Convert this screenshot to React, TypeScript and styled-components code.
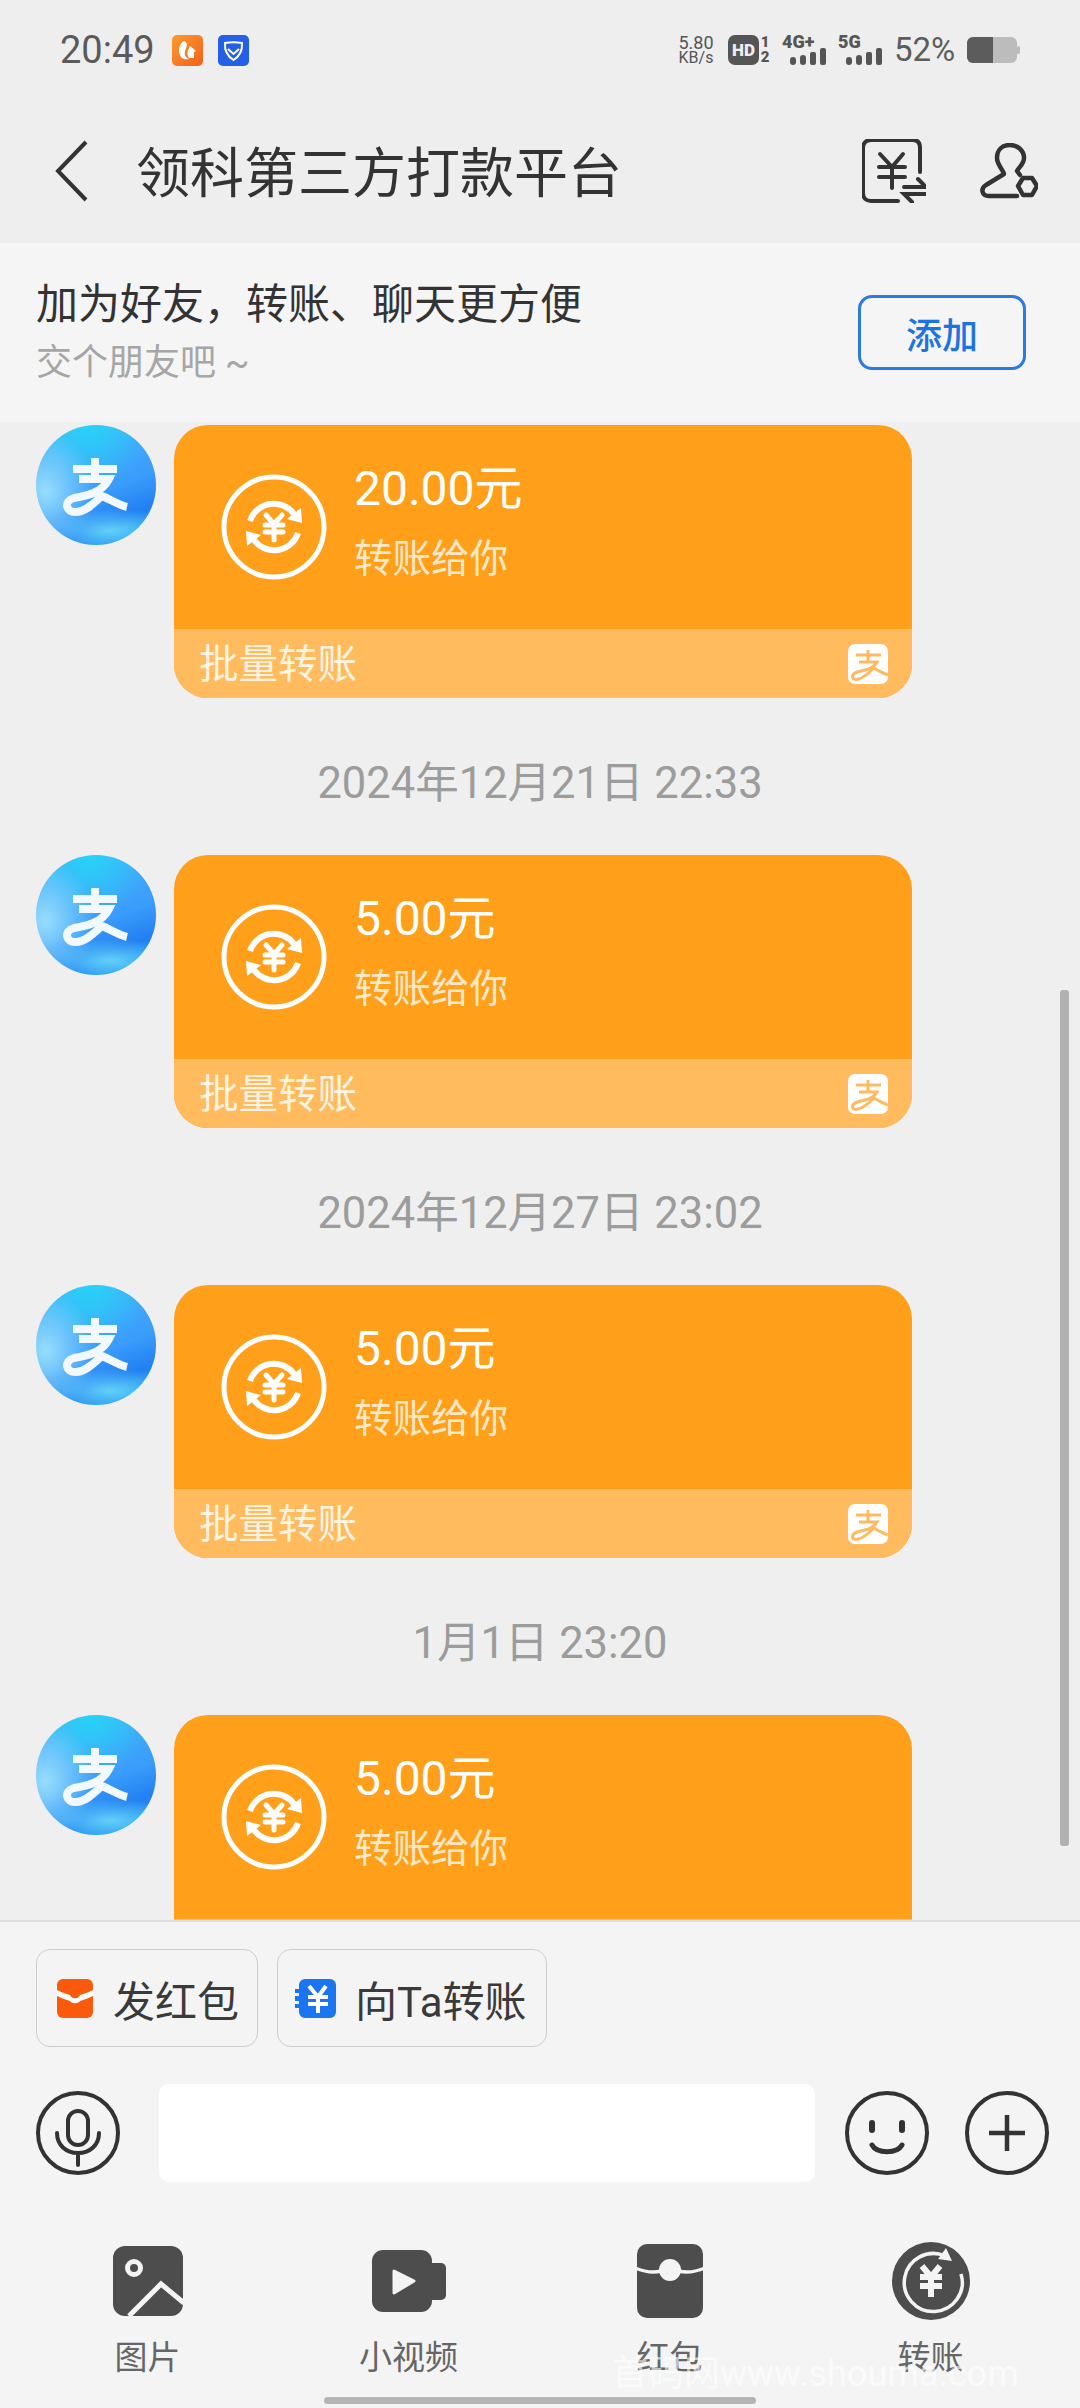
import React from "react";
import styled, { createGlobalStyle } from "styled-components";

const GlobalStyle = createGlobalStyle`
  html, body { margin: 0; padding: 0; background: #efefef; }
  * { box-sizing: border-box; }
`;

const FONT = `Roboto, "Noto Sans CJK SC", sans-serif`;

const Page = styled.div`
  position: relative;
  width: 1080px;
  height: 2408px;
  overflow: hidden;
  display: flex;
  flex-direction: column;
  background: #efefef;
  font-family: ${FONT};
`;

const TopArea = styled.header`
  height: 243px;
  flex: none;
  background: #eeeeee;
  display: flex;
  flex-direction: column;
`;

const StatusBar = styled.div`
  height: 100px;
  padding: 0 60px 0 60px;
  display: flex;
  align-items: center;
  justify-content: space-between;
`;

const StatusLeft = styled.div`
  display: flex;
  align-items: center;
`;

const Clock = styled.span`
  font-size: 38px;
  line-height: 40px;
  color: #5a5a5a;
  width: 112px;
`;

const AppBadge = styled.span`
  width: 31px;
  height: 31px;
  border-radius: 5px;
  margin-right: 15px;
  display: flex;
  align-items: center;
  justify-content: center;
  background: ${(p: { $kind: "uc" | "shield" }) =>
    p.$kind === "uc" ? "linear-gradient(135deg,#ff9a2e,#f2601c)" : "#2460e6"};
`;

const StatusRight = styled.div`
  display: flex;
  align-items: center;
  color: #555;
`;

const Speed = styled.span`
  display: flex;
  flex-direction: column;
  align-items: center;
  width: 38px;
  margin-right: 13px;
  font-size: 18px;
  line-height: 15px;
  color: #555;
  & > small { font-size: 16px; }
`;

const HdBox = styled.span`
  width: 31px;
  height: 30px;
  border-radius: 7px;
  background: #555;
  color: #eee;
  font-size: 17px;
  font-weight: 900;
  display: flex;
  align-items: center;
  justify-content: center;
`;

const SimDigits = styled.span`
  display: flex;
  flex-direction: column;
  align-items: center;
  width: 12px;
  margin-right: 11px;
  font-size: 15px;
  line-height: 15px;
  font-weight: 900;
`;

const Signal = styled.span`
  position: relative;
  width: ${(p: { $w: number }) => p.$w}px;
  height: 30px;
  margin-right: 12px;
`;

const SignalLabel = styled.span`
  position: absolute;
  left: 0;
  top: -3px;
  font-size: 18px;
  line-height: 20px;
  font-weight: 900;
  color: #555;
`;

const SignalBars = styled.svg`
  position: absolute;
  right: 0;
  bottom: 0;
`;

const Percent = styled.span`
  font-size: 33px;
  line-height: 36px;
  color: #5c5c5c;
  width: 73px;
`;

const NavBar = styled.nav`
  height: 143px;
  padding: 0 42px 2px 55px;
  display: flex;
  align-items: center;
`;

const Title = styled.h1`
  margin: 8px 0 0 48px;
  flex: 1;
  font-size: 54px;
  line-height: 70px;
  font-weight: 400;
  color: #333;
`;

const NavIcons = styled.div`
  display: flex;
  align-items: center;
  gap: 54px;
`;

const Banner = styled.section`
  height: 179px;
  flex: none;
  background: #f5f5f5;
  padding: 0 54px 0 36px;
  display: flex;
  align-items: center;
  justify-content: space-between;
`;

const BannerText = styled.div`
  display: flex;
  flex-direction: column;
  gap: 5px;
`;

const BannerTitle = styled.div`
  font-size: 42px;
  line-height: 56px;
  color: #333;
`;

const BannerSub = styled.div`
  font-size: 36px;
  line-height: 50px;
  color: #a6a6a6;
`;

const AddButton = styled.button`
  width: 168px;
  height: 75px;
  border: 3px solid #2a7ae2;
  border-radius: 14px;
  background: transparent;
  color: #1c74e4;
  font-family: ${FONT};
  font-size: 36px;
  font-weight: 500;
  padding: 0;
`;

const Chat = styled.main`
  flex: 1;
  min-height: 0;
  overflow: hidden;
  padding: 3px 0 0 36px;
  display: flex;
  flex-direction: column;
  background: #efefef;
`;

const Row = styled.div`
  flex: none;
  display: flex;
  gap: 18px;
`;

const Avatar = styled.div`
  flex: none;
  width: 120px;
  height: 120px;
  border-radius: 50%;
  overflow: hidden;
  background:
    radial-gradient(ellipse 70px 22px at 62% 88%, rgba(110, 220, 250, 0.85), transparent 100%),
    radial-gradient(ellipse 50px 60px at 8% 55%, rgba(160, 228, 252, 0.9), transparent 100%),
    radial-gradient(circle 60px at 45% 0%, #25d3f7, transparent 100%),
    linear-gradient(160deg, #4bb8fb 0%, #3a9cfb 55%, #2280f2 75%, #1ca2ee 100%);
`;

const Bubble = styled.article`
  flex: none;
  width: 738px;
  height: 273px;
  border-radius: 34px;
  overflow: hidden;
  background: #ff9f1a;
  display: flex;
  flex-direction: column;
`;

const BubbleBody = styled.div`
  flex: 1;
  display: flex;
  align-items: center;
  padding: 0 0 0 47px;
  gap: 27px;
`;

const Amounts = styled.div`
  display: flex;
  flex-direction: column;
  gap: 13px;
  margin-top: -11px;
`;

const Amount = styled.div`
  font-size: 48px;
  line-height: 62px;
  color: #fff;
`;

const Caption = styled.div`
  font-size: 38.5px;
  line-height: 52px;
  color: #ffe8c8;
`;

const BubbleFooter = styled.div`
  height: 69px;
  flex: none;
  background: #ffbb5e;
  padding: 0 24px 0 25px;
  display: flex;
  align-items: center;
  justify-content: space-between;
  color: #fff4e2;
  font-size: 39.5px;
  & > span { margin-top: -6px; }
`;

const MiniLogo = styled.div`
  width: 40px;
  height: 40px;
  border-radius: 7px;
  background: #fff;
  overflow: hidden;
`;

const Stamp = styled.div`
  flex: none;
  height: 157px;
  padding: 5px 36px 0 0;
  display: flex;
  align-items: center;
  justify-content: center;
  font-size: 43.5px;
  color: #9c9c9c;
`;

const ScrollThumb = styled.div`
  position: absolute;
  left: 1060px;
  top: 990px;
  width: 9px;
  height: 856px;
  border-radius: 3px;
  background: #b2b2b2;
`;

const Composer = styled.footer`
  flex: none;
  height: 488px;
  background: #f4f4f4;
  border-top: 2px solid #dedede;
  padding-top: 27px;
  display: flex;
  flex-direction: column;
`;

const Chips = styled.div`
  display: flex;
  gap: 19px;
  padding: 0 36px;
`;

const Chip = styled.div`
  height: 98px;
  width: ${(p: { $w: number }) => p.$w}px;
  border: 1.5px solid #cdcdcd;
  border-radius: 14px;
  padding-left: ${(p: { $w: number }) => (p.$w > 240 ? 15 : 20)}px;
  display: flex;
  align-items: center;
  gap: ${(p: { $w: number }) => (p.$w > 240 ? 19 : 20)}px;
  font-size: 42px;
  color: #3a3a3a;
`;

const InputRow = styled.div`
  margin-top: 37px;
  padding: 0 31px 0 36px;
  display: flex;
  align-items: center;
`;

const TextField = styled.div`
  width: 657px;
  height: 98px;
  margin: 0 30px 0 39px;
  border-radius: 10px;
  background: #fff;
`;

const RoundButton = styled.svg`
  flex: none;
  margin-right: ${(p: { $gap?: number }) => p.$gap ?? 0}px;
`;

const Tools = styled.div`
  margin-top: 59px;
  padding-left: 17px;
  display: grid;
  grid-template-columns: repeat(4, 261px);
`;

const Tool = styled.div`
  display: flex;
  flex-direction: column;
  align-items: center;
  gap: 15px;
`;

const ToolLabel = styled.span`
  font-size: 33px;
  line-height: 44px;
  color: #666;
`;

const HomeBar = styled.div`
  align-self: center;
  width: 432px;
  height: 7px;
  margin-top: 17px;
  border-radius: 4px;
  background: #b5b5b5;
`;

const Watermark = styled.div`
  position: absolute;
  left: 612px;
  bottom: 12px;
  font-size: 36px;
  line-height: 44px;
  color: rgba(255, 255, 255, 0.6);
  white-space: nowrap;
`;

const ZHI_STROKE = "M37 44H81M59 33V54M43 54H73C66 68 50 71 38 73C27 76 30 88 40 87C50 87 60 76 66 71C74 74 82 80 91 82";

const TransferRing = () => (
  <svg width="106" height="106" viewBox="0 0 106 106" fill="none" stroke="#fff">
    <circle cx="53" cy="53" r="50" strokeWidth="5" />
    <path d="M29 47A25 25 0 0 1 73 40" strokeWidth="6" />
    <path d="M66 45L81 49L80 34Z" fill="#fff" stroke="none" />
    <path d="M77 59A25 25 0 0 1 33 66" strokeWidth="6" />
    <path d="M40 61L25 57L26 72Z" fill="#fff" stroke="none" />
    <path d="M45 41L53 50L61 41M44 51H62M44 58H62M53 50V66" strokeWidth="5" strokeLinecap="round" />
  </svg>
);

const MESSAGES = [
  { amount: "20.00元", stamp: "2024年12月21日 22:33" },
  { amount: "5.00元", stamp: "2024年12月27日 23:02" },
  { amount: "5.00元", stamp: "1月1日 23:20" },
  { amount: "5.00元", stamp: "" },
];

const Bars = ({ w }: { w: number }) => (
  <SignalBars width={w} height="17" viewBox={`0 0 ${w} 17`} fill="#555">
    <rect x={w - 36} y="9" width="6" height="8" rx="3" />
    <rect x={w - 26} y="7" width="6" height="10" rx="3" />
    <rect x={w - 16} y="4" width="6" height="13" rx="2" />
    <rect x={w - 6} y="0" width="6" height="17" rx="2" />
  </SignalBars>
);

export default function App() {
  return (
    <Page>
      <GlobalStyle />
      <TopArea>
        <StatusBar>
          <StatusLeft>
            <Clock>20:49</Clock>
            <AppBadge $kind="uc">
              <svg width="25" height="25" viewBox="0 0 25 25" fill="#fff">
                <path d="M9 3C4 6 3 12 5 17C6 21 10 22 14 21C11 20 9 17 10 13C11 10 12 8 12 6C11 4 10 3 9 3Z" />
                <path d="M15 8L21 13L19 14V20H14C12 18 12 14 13 12Z" />
              </svg>
            </AppBadge>
            <AppBadge $kind="shield">
              <svg width="25" height="25" viewBox="0 0 25 25" fill="none" stroke="#fff" strokeWidth="2">
                <path d="M4 5C9 4 16 4 21 5C21.500 12 19 18 12.500 22C6 18 3.500 12 4 5Z" />
                <path d="M7 11L12.500 16L18 11" />
              </svg>
            </AppBadge>
          </StatusLeft>
          <StatusRight>
            <Speed>
              5.80
              <small>KB/s</small>
            </Speed>
            <HdBox>HD</HdBox>
            <SimDigits>
              <span>1</span>
              <span>2</span>
            </SimDigits>
            <Signal $w={44}>
              <SignalLabel>4G+</SignalLabel>
              <Bars w={44} />
            </Signal>
            <Signal $w={44}>
              <SignalLabel>5G</SignalLabel>
              <Bars w={44} />
            </Signal>
            <Percent>52%</Percent>
            <svg width="53" height="26" viewBox="0 0 53 26">
              <rect x="0" y="0" width="50" height="26" rx="6" fill="#bcbcbc" />
              <path d="M6 0H26V26H6A6 6 0 0 1 0 20V6A6 6 0 0 1 6 0Z" fill="#5c5c5c" />
              <rect x="50" y="9" width="3" height="8" rx="1.500" fill="#bcbcbc" />
            </svg>
          </StatusRight>
        </StatusBar>
        <NavBar>
          <svg width="33" height="62" viewBox="0 0 33 62" fill="none" stroke="#333" strokeWidth="4">
            <path d="M31 2L3 31L31 60" />
          </svg>
          <Title>领科第三方打款平台</Title>
          <NavIcons>
            <svg width="64" height="64" viewBox="0 0 64 64" fill="none" stroke="#333" strokeWidth="4" strokeLinecap="round">
              <path d="M36 62H9C4 62 1 59 1 54V9C1 4 4 1 9 1H51C56 1 58 4 58 9V33" />
              <path d="M18 15L30 28L41 15M17 28H43M17 38H43M30 28V49" />
              <path d="M42 48H64L56 40M64 55H42L50 63" />
            </svg>
            <svg width="58" height="56" viewBox="0 0 58 56" fill="none" stroke="#333" strokeWidth="4.500" strokeLinecap="round" strokeLinejoin="round">
              <path d="M37 53H9C2 53 0 46 6 42L24 31C24 28 17 22 17 15C17 7 22 2 30 2C37 2 44 7 44 15C44 21 39 24 37 28L40 32" />
              <path d="M43 35H52L57 43L52 52H43L38 43Z" />
            </svg>
          </NavIcons>
        </NavBar>
      </TopArea>

      <Banner>
        <BannerText>
          <BannerTitle>加为好友，转账、聊天更方便</BannerTitle>
          <BannerSub>交个朋友吧 ~</BannerSub>
        </BannerText>
        <AddButton>添加</AddButton>
      </Banner>

      <Chat>
        {MESSAGES.map((m, i) => (
          <React.Fragment key={i}>
            <Row>
              <Avatar>
                <svg width="120" height="120" viewBox="0 0 120 120" fill="none" stroke="#f1f8fe" strokeWidth="8">
                  <path d={ZHI_STROKE} />
                </svg>
              </Avatar>
              <Bubble>
                <BubbleBody>
                  <TransferRing />
                  <Amounts>
                    <Amount>{m.amount}</Amount>
                    <Caption>转账给你</Caption>
                  </Amounts>
                </BubbleBody>
                <BubbleFooter>
                  <span>批量转账</span>
                  <MiniLogo>
                    <svg width="40" height="40" viewBox="0 0 40 40" fill="none" stroke="#fdba62" strokeWidth="3">
                      <path d="M8 11H33M20 6V18M11 18H29C25 25 17 26 9 28C2 31 4 37 10 35C16 34 22 28 26 24C30 27 35 29 40 31" />
                    </svg>
                  </MiniLogo>
                </BubbleFooter>
              </Bubble>
            </Row>
            {m.stamp && <Stamp>{m.stamp}</Stamp>}
          </React.Fragment>
        ))}
      </Chat>

      <ScrollThumb />

      <Composer>
        <Chips>
          <Chip $w={222}>
            <svg width="36" height="39" viewBox="0 0 36 39">
              <rect width="36" height="39" rx="6" fill="#fb5a0c" />
              <path d="M0 11C6 14 10 15 13 16A5.500 5.500 0 0 0 23 16C26 15 30 14 36 11V17C31 19 27 21 23 22C21 25 15 25 13 22C9 21 5 19 0 17Z" fill="#fff" />
            </svg>
            发红包
          </Chip>
          <Chip $w={270}>
            <svg width="43" height="39" viewBox="0 0 43 39">
              <path d="M6 6A6 6 0 0 1 12 0H37A6 6 0 0 1 43 6V33A6 6 0 0 1 37 39H12A6 6 0 0 1 6 33V29H2V25H6V22H2V17H6V14H2V10H6Z" fill="#1b74f0" />
              <path d="M16 7L25 18L33 7M15 18H35M15 25H35M25 18V34" fill="none" stroke="#fff" strokeWidth="4" />
            </svg>
            向Ta转账
          </Chip>
        </Chips>

        <InputRow>
          <RoundButton width="84" height="84" viewBox="0 0 84 84" fill="none" stroke="#333" strokeWidth="4" strokeLinecap="round">
            <circle cx="42" cy="42" r="40" />
            <rect x="32" y="20" width="20" height="34" rx="10" />
            <path d="M21 42C21 54 30 62 42 62C54 62 63 54 63 42M42 62V74" />
          </RoundButton>
          <TextField />
          <RoundButton $gap={36} width="84" height="84" viewBox="0 0 84 84" fill="none" stroke="#333" strokeWidth="4" strokeLinecap="round">
            <circle cx="42" cy="42" r="40" />
            <path d="M27 54C32 63 52 63 57 54" strokeWidth="5" />
            <path d="M27 32V39M57 32V39" strokeWidth="6" />
          </RoundButton>
          <RoundButton width="84" height="84" viewBox="0 0 84 84" fill="none" stroke="#333" strokeWidth="4">
            <circle cx="42" cy="42" r="40" />
            <path d="M24 42H60M42 24V60" strokeWidth="4.500" />
          </RoundButton>
        </InputRow>

        <Tools>
          <Tool>
            <svg width="80" height="80" viewBox="0 0 80 80">
              <path d="M17 5H63A12 12 0 0 1 75 17V63A12 12 0 0 1 63 75H17A12 12 0 0 1 5 63V17A12 12 0 0 1 17 5Z" fill="#4d4d4d" />
              <circle cx="26" cy="27" r="6.500" fill="#4d4d4d" stroke="#f4f4f4" strokeWidth="5" />
              <path d="M21 75L53 43L76 62" fill="none" stroke="#f4f4f4" strokeWidth="5" />
            </svg>
            <ToolLabel>图片</ToolLabel>
          </Tool>
          <Tool>
            <svg width="80" height="80" viewBox="0 0 80 80" fill="#4d4d4d">
              <rect x="3" y="9" width="60" height="62" rx="11" />
              <rect x="50" y="22" width="27" height="37" rx="5" />
              <path d="M25 30L45 40L25 52Z" fill="#f4f4f4" stroke="#f4f4f4" strokeWidth="3" strokeLinejoin="round" />
            </svg>
            <ToolLabel>小视频</ToolLabel>
          </Tool>
          <Tool>
            <svg width="80" height="80" viewBox="0 0 80 80">
              <rect x="7" y="3" width="66" height="74" rx="10" fill="#4d4d4d" />
              <path d="M5 27C15 31 24 32 31 30M49 30C56 32 65 31 75 27" fill="none" stroke="#f4f4f4" strokeWidth="3.500" />
              <circle cx="40" cy="29" r="11" fill="#f4f4f4" />
            </svg>
            <ToolLabel>红包</ToolLabel>
          </Tool>
          <Tool>
            <svg width="80" height="80" viewBox="0 0 80 80" fill="none" stroke="#f4f4f4">
              <circle cx="40" cy="40" r="39" fill="#4d4d4d" stroke="none" />
              <path d="M70 33A29 29 0 1 1 54 15" strokeWidth="3.500" />
              <path d="M55 7L61 20L47 18Z" fill="#f4f4f4" stroke="none" />
              <path d="M31 25L40 36L49 25M29 36H51M29 45H51M40 36V56" strokeWidth="6" />
            </svg>
            <ToolLabel>转账</ToolLabel>
          </Tool>
        </Tools>
        <HomeBar />
      </Composer>
      <Watermark>首码网www.shouma.com</Watermark>
    </Page>
  );
}
